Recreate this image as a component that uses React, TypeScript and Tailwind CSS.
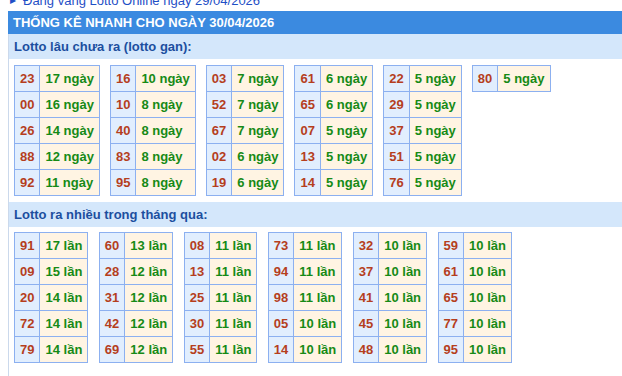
const gan: [string, string][][] = [
  [["23", "17"], ["00", "16"], ["26", "14"], ["88", "12"], ["92", "11"]],
  [["16", "10"], ["10", "8"], ["40", "8"], ["83", "8"], ["95", "8"]],
  [["03", "7"], ["52", "7"], ["67", "7"], ["02", "6"], ["19", "6"]],
  [["61", "6"], ["65", "6"], ["07", "5"], ["13", "5"], ["14", "5"]],
  [["22", "5"], ["29", "5"], ["37", "5"], ["51", "5"], ["76", "5"]],
  [["80", "5"]],
];

const nhieu: [string, string][][] = [
  [["91", "17"], ["09", "15"], ["20", "14"], ["72", "14"], ["79", "14"]],
  [["60", "13"], ["28", "12"], ["31", "12"], ["42", "12"], ["69", "12"]],
  [["08", "11"], ["13", "11"], ["25", "11"], ["30", "11"], ["55", "11"]],
  [["73", "11"], ["94", "11"], ["98", "11"], ["05", "10"], ["14", "10"]],
  [["32", "10"], ["37", "10"], ["41", "10"], ["45", "10"], ["48", "10"]],
  [["59", "10"], ["61", "10"], ["65", "10"], ["77", "10"], ["95", "10"]],
];

const StatTable = ({ rows, unit }: { rows: [string, string][]; unit: string }) => {
  return (
    <div className="grid grid-cols-[auto_auto] self-start border-l border-t border-[#8cb0f0]">
      {rows.map(([num, count]) => (
        <div key={num} className="contents">
          <div className="h-[26px] px-[5px] flex items-center justify-center border-r border-b border-[#8cb0f0] bg-[#e1eefe] text-[#b53e1d]">
            {num}
          </div>
          <div className="h-[26px] px-[5px] flex items-center border-r border-b border-[#8cb0f0] bg-[#fff4e3] text-[#168a16] font-bold">
            {count} {unit}
          </div>
        </div>
      ))}
    </div>
  );
};

const SectionTitle = ({ title }: { title: string }) => (
  <div className="h-[25px] bg-[#d4e7fb] pl-[5px] flex items-center text-[13px] font-bold text-[#1c4f9f]">
    {title}
  </div>
);

export default function App() {
  return (
    <div className="w-[622px] h-[376px] overflow-hidden bg-white font-['Liberation_Sans',Arial,sans-serif] flex flex-col">
      <div className="h-[11px] overflow-hidden pl-[10px]">
        <div className="-mt-[7px] flex items-center gap-[7px] text-[13px] leading-[15px] text-[#1f4fc6]">
          <span className="text-[8px]">▶</span>
          <span>Đăng vàng Lotto Online ngày 29/04/2026</span>
        </div>
      </div>
      <div className="ml-[8px] h-[23px] bg-[#3b8ae0] pl-[5px] flex items-center text-white text-[13px] font-bold">
        THỐNG KÊ NHANH CHO NGÀY 30/04/2026
      </div>
      <div className="ml-[8px] flex-1 border-l border-[#cbd9ec]">
        <SectionTitle title="Lotto lâu chưa ra (lotto gan):" />
        <div className="flex gap-[10px] pl-[5px] pt-[6px] pb-[6px] text-[13px] font-bold">
          {gan.map((rows, i) => (
            <StatTable key={i} rows={rows} unit="ngày" />
          ))}
        </div>
        <SectionTitle title="Lotto ra nhiều trong tháng qua:" />
        <div className="flex gap-[10.5px] pl-[5px] pt-[5px] text-[13px] font-bold">
          {nhieu.map((rows, i) => (
            <StatTable key={i} rows={rows} unit="lần" />
          ))}
        </div>
      </div>
    </div>
  );
}
